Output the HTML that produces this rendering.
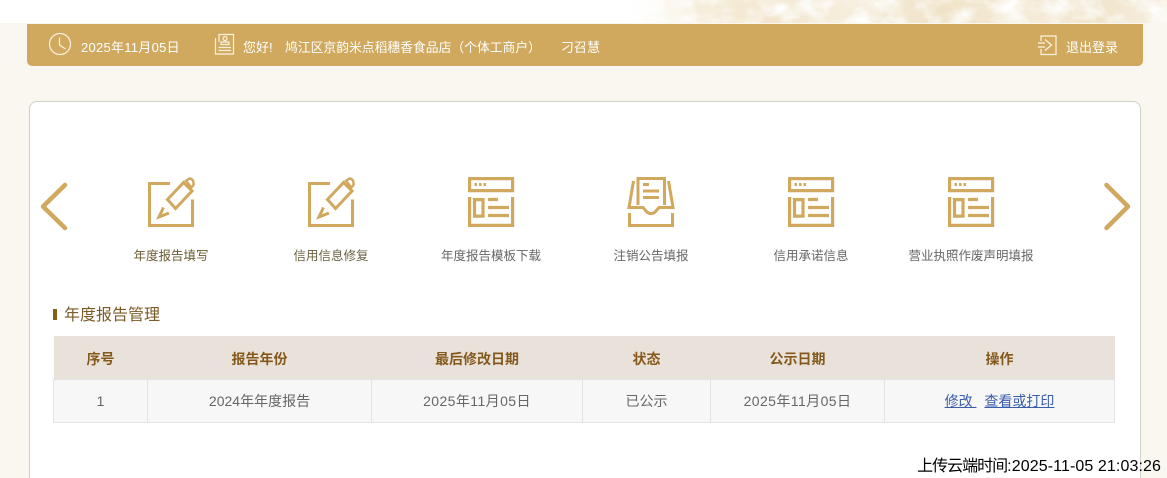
<!DOCTYPE html>
<html lang="zh-CN"><head><meta charset="utf-8"><title>年度报告管理</title>
<style>
*{margin:0;padding:0;box-sizing:border-box}
html,body{width:1167px;height:478px;overflow:hidden;background:#faf7f0}
body{position:relative;font-family:"Liberation Sans","Noto Sans CJK SC",sans-serif}
.abs{position:absolute;white-space:nowrap}
.top{left:0;top:0;width:1167px;height:23px;background:#fff}
.bar{left:27px;top:24px;width:1116px;height:42px;background:#d0a95f;border-radius:0 0 5px 5px}
.bt{color:#fff;font-size:13px;line-height:18px;top:39px}
.card{left:29px;top:101px;width:1112px;height:377px;background:#fff;border:1px solid #d2cfc9;border-bottom:0;border-radius:8px 8px 0 0}
.lab{top:247px;width:180px;text-align:center;font-size:12.5px;line-height:18px;color:#666}
svg.i{position:absolute;left:0;top:0;fill:none;overflow:hidden}
.ttl{left:64px;top:306px;font-size:16px;line-height:20px;color:#7a5a26}
.mk{left:53px;top:309px;width:4px;height:11px;background:#8a5c16}
table{position:absolute;left:53px;top:336px;width:1061px;height:87px;border-collapse:collapse;table-layout:fixed;font-size:14px;text-align:center}
th{height:43px;padding-top:4px;background:#e8e2db;color:#85581c;font-weight:700;border:0}
td{height:43px;background:#f7f7f7;color:#666;border:1px solid #e3e3e3}
td.d{letter-spacing:.42px}
td a{color:#3a5cab;text-decoration:underline}
.up{right:6px;top:457px;font-size:16px;line-height:20px;color:#000}
</style></head>
<body>
<div class="abs top"></div>
<svg class="abs" style="left:600px;top:0" width="567" height="23" viewBox="0 0 567 23">
<defs>
<linearGradient id="g" x1="0" x2="1" y1="0" y2="0"><stop offset="0.03" stop-color="#fff"/><stop offset="0.12" stop-color="#f8f1e2"/><stop offset="0.3" stop-color="#f2e6ce"/><stop offset="0.45" stop-color="#f6eedd"/><stop offset="0.6" stop-color="#efe2c6"/><stop offset="0.75" stop-color="#f5ecd9"/><stop offset="0.88" stop-color="#f0e4cb"/><stop offset="1" stop-color="#f7f0e2"/></linearGradient>
<linearGradient id="f" x1="0" x2="1" y1="0" y2="0"><stop offset="0.05" stop-color="#fff" stop-opacity="1"/><stop offset="0.17" stop-color="#fff" stop-opacity="0"/></linearGradient>
<filter id="t" x="0" y="0" width="100%" height="100%"><feTurbulence type="fractalNoise" baseFrequency="0.04 0.06" numOctaves="4" seed="7"/><feColorMatrix values="0 0 0 0 1  0 0 0 0 1  0 0 0 0 1  2.2 0 0 0 -0.85"/></filter>
</defs>
<rect width="567" height="23" fill="url(#g)"/>
<rect width="567" height="23" filter="url(#t)"/>
<rect width="567" height="23" fill="url(#f)"/>
</svg>
<div class="abs bar"></div>
<svg class="i" width="1167" height="478" stroke="#fbf3e0" stroke-width="1.200">
<circle cx="60" cy="44" r="10.500"/>
<path d="M59.500 37.500v7.500l6 4"/>
<path d="M219 42v-7.500h14.500v19.500H215.500V38"/>
<circle cx="225" cy="38.500" r="2"/>
<path d="M221 44.500v-2.500h8v2.500zM218.500 47.500h12.500M218.500 50.500h12.500"/>
<path d="M1041 41v-5h15v18.500h-15v-5.500M1038 43h7M1038 47h7M1045 39.500l6.500 5.500-6.500 5.500"/>
</svg>
<span class="abs bt" style="left:81px;letter-spacing:.27px">2025年11月05日</span>
<span class="abs bt" style="left:243px">您好!</span>
<span class="abs bt" style="left:285px;font-size:12.8px">鸠江区京韵米点稻穗香食品店（个体工商户）</span>
<span class="abs bt" style="left:561px">刁召慧</span>
<span class="abs bt" style="left:1066px">退出登录</span>

<div class="abs card"></div>

<svg class="i" width="1167" height="478" stroke="#d0a95f">
<path d="M65 185 43 206.500 65 228M1106.500 185 1128 206.500 1106.500 228" stroke-width="4.500" stroke-linecap="round" stroke-linejoin="round"/>
<g stroke-width="3">
<path d="M170 183.500h-20.500v42h43v-26"/>
<path d="M167.500 199.500l16-17 8.500 8.500-16.500 17.500zM163.500 207.500l-4.500 9.500 10-4"/>
<path d="M186 181l3.500-2.500c3 0 4.500 3 4 6.500l-2 2.500z" stroke-width="2.400"/>
</g>
<g stroke-width="3" transform="translate(160 0)">
<path d="M170 183.500h-20.500v42h43v-26"/>
<path d="M167.500 199.500l16-17 8.500 8.500-16.500 17.500zM163.500 207.500l-4.500 9.500 10-4"/>
<path d="M186 181l3.500-2.500c3 0 4.500 3 4 6.500l-2 2.500z" stroke-width="2.400"/>
</g>
<g stroke-width="3.200">
<path d="M469.600 178.600h43v12h-43zM469.600 197v28.400h43V197M474.500 199.600h8.500v16.500h-8.500zM488 199.500h10M488 207.500h21M488 215.500h21"/>
<path d="M474.500 184.500h2.500M479 184.500h2.500M483.500 184.500h2.500" stroke-width="3"/>
</g>
<g stroke-width="3.200" transform="translate(320 0)">
<path d="M469.600 178.600h43v12h-43zM469.600 197v28.400h43V197M474.500 199.600h8.500v16.500h-8.500zM488 199.500h10M488 207.500h21M488 215.500h21"/>
<path d="M474.500 184.500h2.500M479 184.500h2.500M483.500 184.500h2.500" stroke-width="3"/>
</g>
<g stroke-width="3.200" transform="translate(480 0)">
<path d="M469.600 178.600h43v12h-43zM469.600 197v28.400h43V197M474.500 199.600h8.500v16.500h-8.500zM488 199.500h10M488 207.500h21M488 215.500h21"/>
<path d="M474.500 184.500h2.500M479 184.500h2.500M483.500 184.500h2.500" stroke-width="3"/>
</g>
<g stroke-width="3">
<path d="M638 205v-26.500h26.500V205M633.500 181l-4.500 26.500h14l3 3.500c3 3.500 7 3.500 10 0l3-3.500h14l-4.500-26.500M629.500 213v12.500h43V213"/>
<path d="M643 184.500h6M643 191h16M643 197.500h16"/>
</g>
</svg>

<span class="abs lab" style="left:81px;color:#6b5b30">年度报告填写</span>
<span class="abs lab" style="left:241px;color:#6a6040">信用信息修复</span>
<span class="abs lab" style="left:401px">年度报告模板下载</span>
<span class="abs lab" style="left:561px">注销公告填报</span>
<span class="abs lab" style="left:721px">信用承诺信息</span>
<span class="abs lab" style="left:881px">营业执照作废声明填报</span>

<div class="abs mk"></div>
<div class="abs ttl">年度报告管理</div>

<table>
<colgroup><col style="width:94px"><col style="width:224px"><col style="width:211px"><col style="width:128px"><col style="width:174px"><col style="width:230px"></colgroup>
<tr><th>序号</th><th>报告年份</th><th>最后修改日期</th><th>状态</th><th>公示日期</th><th>操作</th></tr>
<tr><td>1</td><td>2024年年度报告</td><td class="d">2025年11月05日</td><td>已公示</td><td class="d">2025年11月05日</td><td><a>修改&nbsp;</a>&nbsp;<a style="margin-left:4px">查看或打印</a></td></tr>
</table>

<div class="abs up"><span style="letter-spacing:-1px">上传云端时间</span><span style="letter-spacing:.1px">:2025-11-05 21:03:26</span></div>
</body></html>
